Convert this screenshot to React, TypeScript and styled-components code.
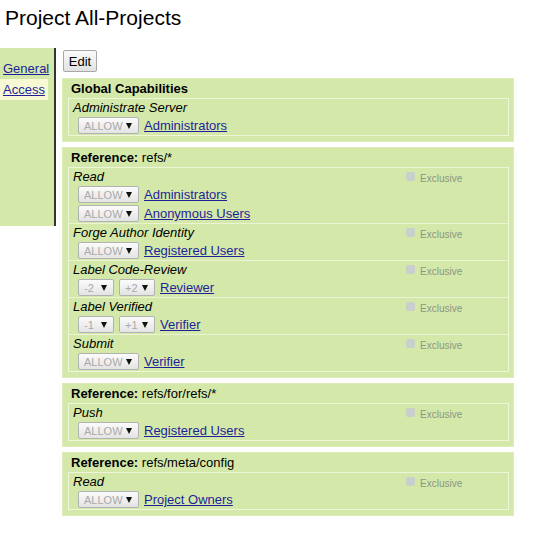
import React from 'react';
import styled, { createGlobalStyle } from 'styled-components';

const GlobalStyle = createGlobalStyle`
  body {
    margin: 0;
    background: #fff;
    font-family: 'Liberation Sans', Arial, sans-serif;
    font-size: 13px;
    color: #000;
  }
`;

const Page = styled.div`
  width: 540px;
  height: 546px;
  overflow: hidden;
`;

const Title = styled.h1`
  margin: 6px 0 0 5px;
  font-size: 21px;
  font-weight: normal;
  line-height: 24px;
`;

const Main = styled.div`
  display: flex;
  align-items: flex-start;
  margin-top: 18px;
`;

const Nav = styled.div`
  width: 56px;
  height: 178px;
  padding-top: 10px;
  box-sizing: border-box;
  background: #d4e9a9;
  border-right: 2px solid #333;
`;

const NavItem = styled.div<{ $active?: boolean }>`
  width: 45px;
  height: 21px;
  line-height: 21px;
  padding-left: 3px;
  background: ${(p) => (p.$active ? '#f6f9d4' : 'transparent')};
`;

const Link = styled.a`
  color: #1f1f9a;
  text-decoration: underline;
  cursor: pointer;
`;

const Content = styled.div`
  margin-left: 6px;
  width: 452px;
`;

const EditButton = styled.button`
  display: block;
  margin: 2px 0 6px 1px;
  width: 34px;
  height: 22px;
  padding: 0;
  font-family: 'Liberation Sans', Arial, sans-serif;
  font-size: 13px;
  color: #000;
  border: 1px solid #a8a8a8;
  border-radius: 2px;
  background: linear-gradient(#fafafa, #e2e2e2);
`;

const Section = styled.div`
  background: #d4e9a9;
  border: 1px solid #dcedba;
  padding: 0 4px 5px 5px;
  margin-bottom: 5px;
`;

const SectionHeader = styled.div`
  height: 19px;
  line-height: 19px;
  padding-left: 3px;
  font-weight: bold;
  span {
    font-weight: normal;
  }
`;

const PermissionList = styled.div`
  border: 1px solid #eef6da;
`;

const Permission = styled.div`
  & + & {
    border-top: 1px solid #eaf4d2;
  }
`;

const PermTitle = styled.div`
  display: flex;
  align-items: center;
  height: 17px;
  padding-left: 4px;
  font-style: italic;
`;

const TitleText = styled.div`
  flex: 1;
`;

const Exclusive = styled.div`
  display: flex;
  align-items: center;
  width: 102px;
  margin-top: 3px;
  font-style: normal;
  font-size: 10px;
  color: #8c9687;
`;

const CheckBox = styled.span`
  width: 9px;
  height: 9px;
  margin-right: 5px;
  margin-top: -4px;
  border-radius: 2px;
  background: #c9d0cb;
`;

const RuleRow = styled.div`
  display: flex;
  align-items: center;
  gap: 5px;
  height: 19px;
  padding-left: 9px;
`;

const Select = styled.div<{ $w: number }>`
  display: flex;
  align-items: center;
  justify-content: space-between;
  box-sizing: border-box;
  width: ${(p) => p.$w}px;
  height: 17px;
  padding: 0 6px 0 5px;
  border: 1px solid #b2b2b2;
  border-radius: 2px;
  background: linear-gradient(#fbfbfb, #e4e4e4);
  font-size: 11px;
  color: #a9a9a9;
`;

const Arrow = styled.span`
  width: 0;
  height: 0;
  border-left: 3px solid transparent;
  border-right: 3px solid transparent;
  border-top: 6px solid #111;
`;

type Rule = { actions: string[]; group: string };
type Perm = { name: string; rules: Rule[]; exclusive?: boolean };
type Sect = { label: string; ref?: string; perms: Perm[] };

const sections: Sect[] = [
  {
    label: 'Global Capabilities',
    perms: [{ name: 'Administrate Server', rules: [{ actions: ['ALLOW'], group: 'Administrators' }] }],
  },
  {
    label: 'Reference:',
    ref: 'refs/*',
    perms: [
      {
        name: 'Read',
        exclusive: true,
        rules: [
          { actions: ['ALLOW'], group: 'Administrators' },
          { actions: ['ALLOW'], group: 'Anonymous Users' },
        ],
      },
      { name: 'Forge Author Identity', exclusive: true, rules: [{ actions: ['ALLOW'], group: 'Registered Users' }] },
      { name: 'Label Code-Review', exclusive: true, rules: [{ actions: ['-2', '+2'], group: 'Reviewer' }] },
      { name: 'Label Verified', exclusive: true, rules: [{ actions: ['-1', '+1'], group: 'Verifier' }] },
      { name: 'Submit', exclusive: true, rules: [{ actions: ['ALLOW'], group: 'Verifier' }] },
    ],
  },
  {
    label: 'Reference:',
    ref: 'refs/for/refs/*',
    perms: [{ name: 'Push', exclusive: true, rules: [{ actions: ['ALLOW'], group: 'Registered Users' }] }],
  },
  {
    label: 'Reference:',
    ref: 'refs/meta/config',
    perms: [{ name: 'Read', exclusive: true, rules: [{ actions: ['ALLOW'], group: 'Project Owners' }] }],
  },
];

const App = () => {
  return (
    <Page>
      <GlobalStyle />
      <Title>Project All-Projects</Title>
      <Main>
        <Nav>
          <NavItem>
            <Link>General</Link>
          </NavItem>
          <NavItem $active>
            <Link>Access</Link>
          </NavItem>
        </Nav>
        <Content>
          <EditButton>Edit</EditButton>
          {sections.map((s, i) => (
            <Section key={i}>
              <SectionHeader>
                {s.label}
                {s.ref && <span> {s.ref}</span>}
              </SectionHeader>
              <PermissionList>
                {s.perms.map((p) => (
                  <Permission key={p.name}>
                    <PermTitle>
                      <TitleText>{p.name}</TitleText>
                      {p.exclusive && (
                        <Exclusive>
                          <CheckBox />
                          Exclusive
                        </Exclusive>
                      )}
                    </PermTitle>
                    {p.rules.map((r, j) => (
                      <RuleRow key={j}>
                        {r.actions.map((a) => (
                          <Select key={a} $w={a === 'ALLOW' ? 61 : 36}>
                            {a}
                            <Arrow />
                          </Select>
                        ))}
                        <Link>{r.group}</Link>
                      </RuleRow>
                    ))}
                  </Permission>
                ))}
              </PermissionList>
            </Section>
          ))}
        </Content>
      </Main>
    </Page>
  );
};

export default App;
